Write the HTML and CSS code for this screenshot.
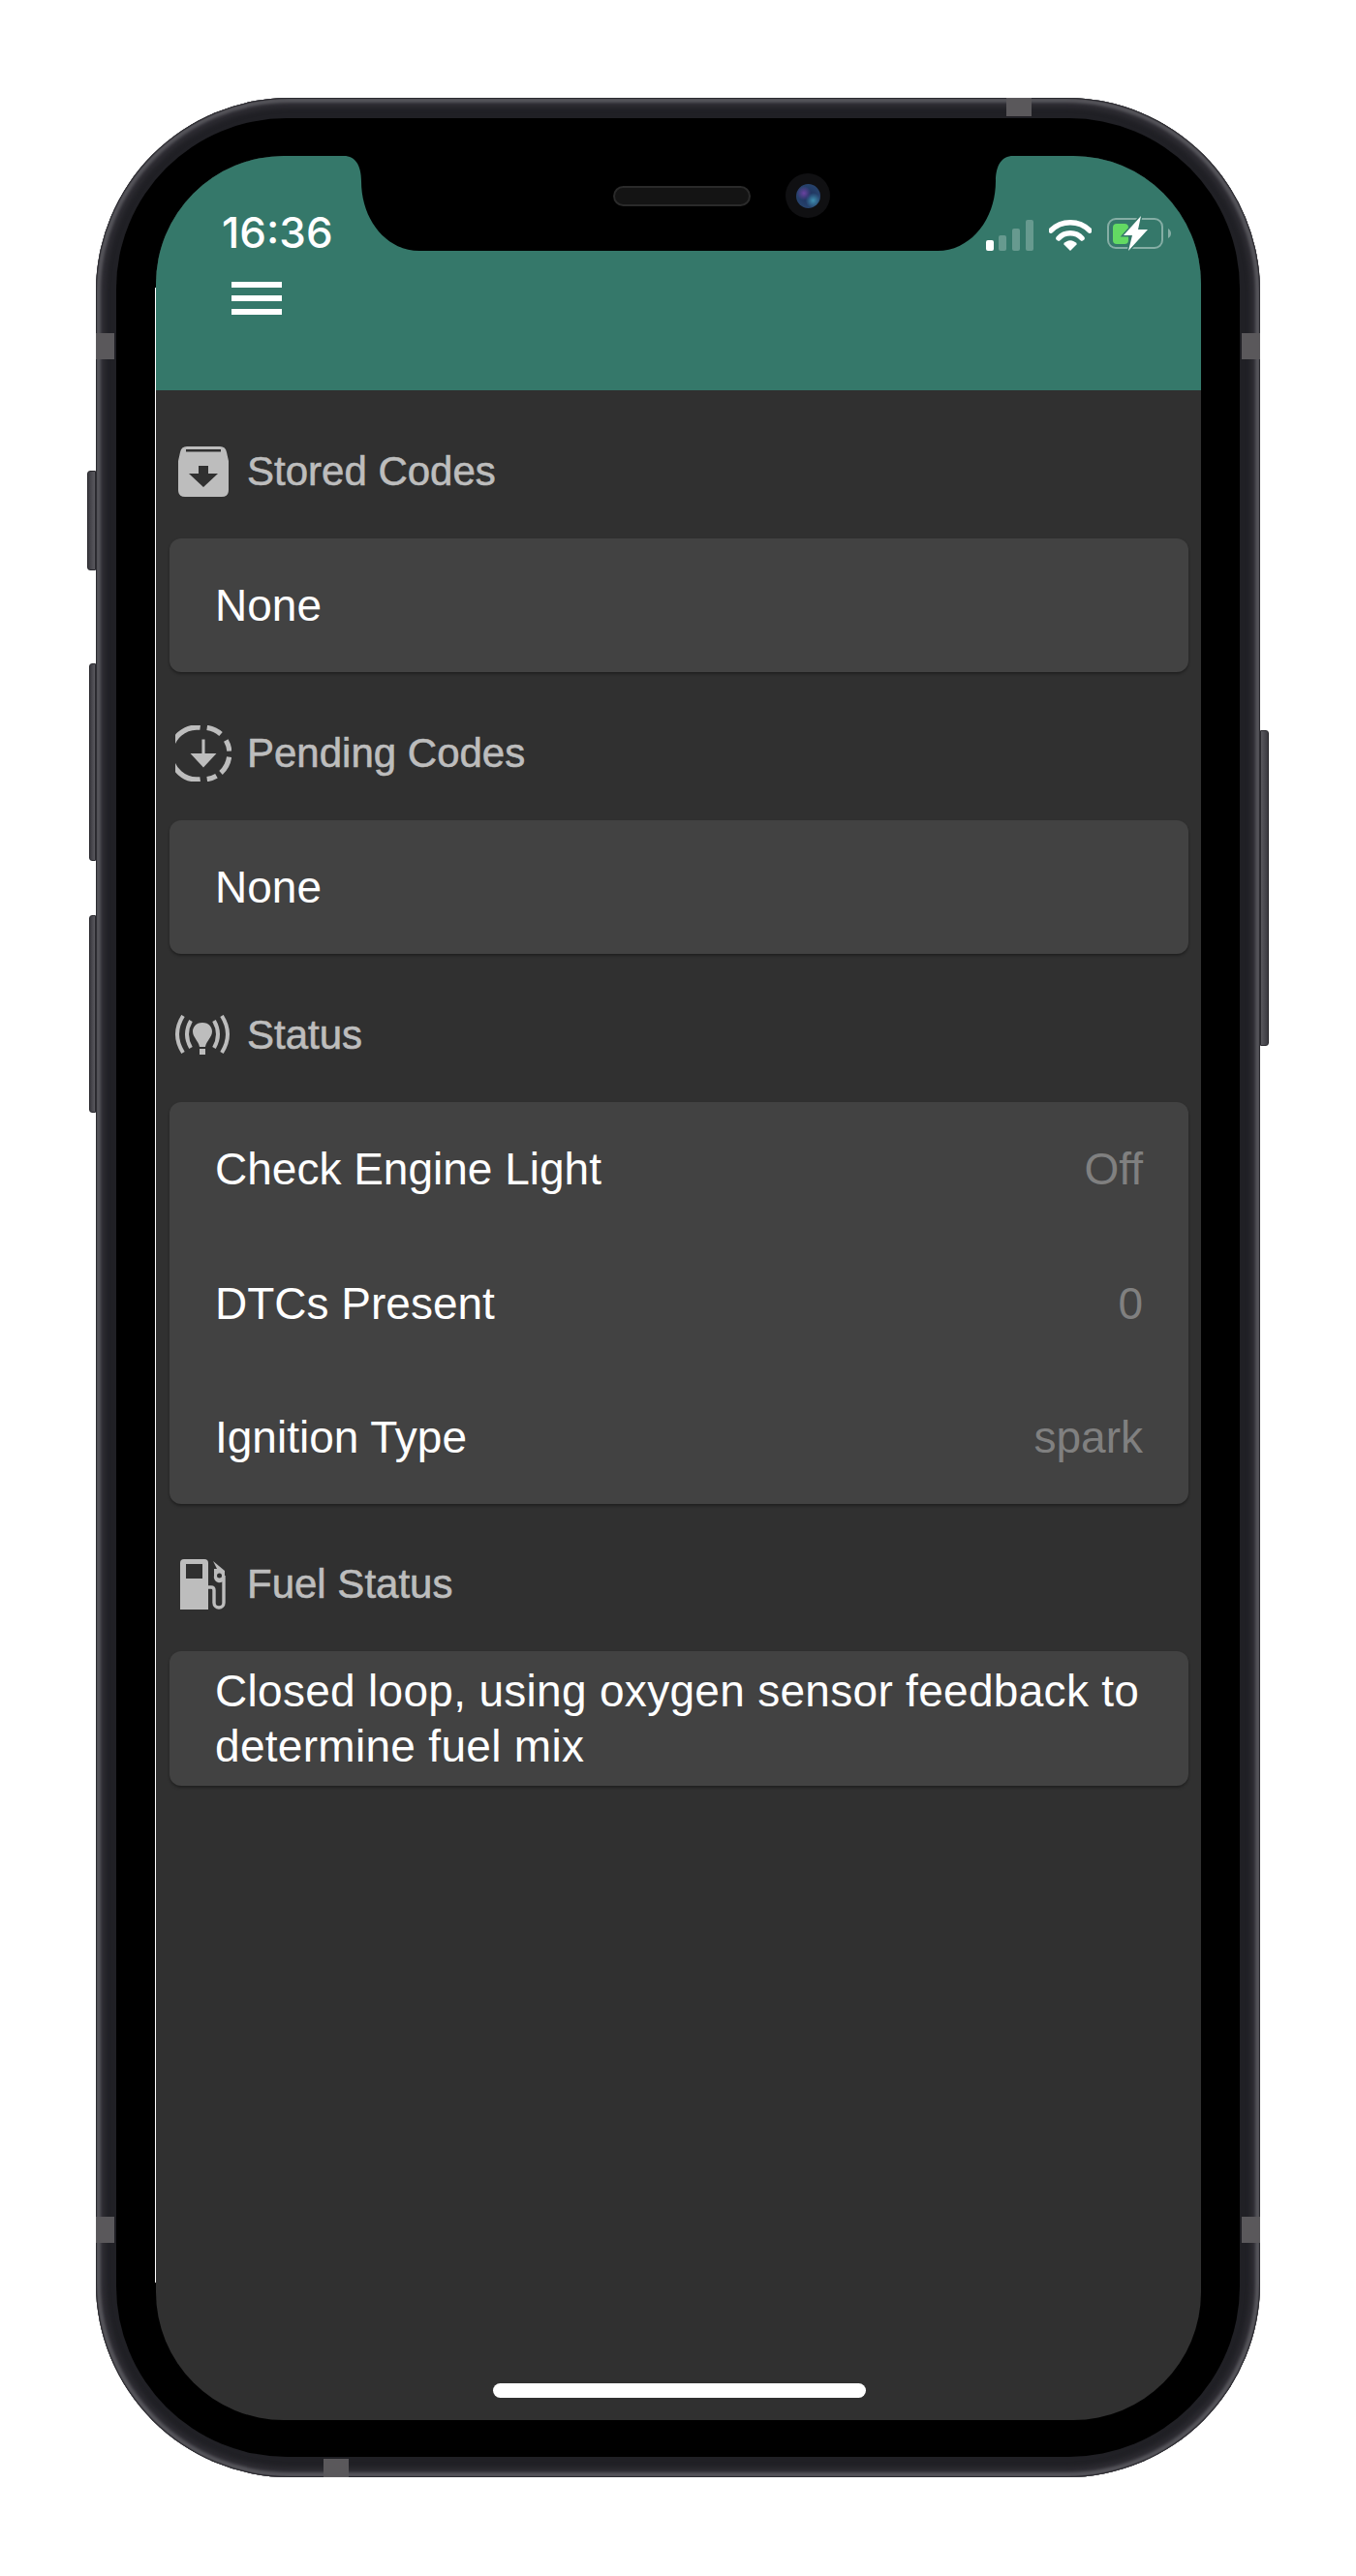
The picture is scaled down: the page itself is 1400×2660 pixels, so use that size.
FILE: index.html
```html
<!DOCTYPE html>
<html lang="en">
<head>
    <meta charset="UTF-8">
    <meta name="viewport" content="width=device-width, initial-scale=1.0">
    <title>Vehicle Diagnostics</title>
    <link rel="stylesheet" href="styles.css">
</head>
<body>
    <div class="phone">
        <span class="side-btn mute"></span>
        <span class="side-btn vol-up"></span>
        <span class="side-btn vol-down"></span>
        <span class="side-btn power"></span>
        <span class="band band-lt"></span>
        <span class="band band-lb"></span>
        <span class="band band-rt"></span>
        <span class="band band-rb"></span>
        <span class="band-h band-top"></span>
        <span class="band-h band-bottom"></span>

        <div class="bezel">
            <span class="edge-line"></span>
            <div class="screen">
                <header class="app-bar">
                    <div class="status-bar">
                        <span class="clock">16:36</span>
                        <div class="status-icons">
                            <svg class="signal" width="49" height="32" viewBox="0 0 49 32">
                                <rect x="0" y="21" width="8" height="11" rx="2" fill="#fff"/>
                                <rect x="13" y="16" width="8" height="16" rx="2" fill="#fff" opacity=".25"/>
                                <rect x="27" y="9" width="8" height="23" rx="2" fill="#fff" opacity=".25"/>
                                <rect x="41" y="0" width="8" height="32" rx="2" fill="#fff" opacity=".25"/>
                            </svg>
                            <svg class="wifi" width="44" height="32" viewBox="0 0 44 32">
                                <path d="M2 11C13 0 31 0 42 11" fill="none" stroke="#fff" stroke-width="5.5" stroke-linecap="round"/>
                                <path d="M10 19C16 12 28 12 34 19" fill="none" stroke="#fff" stroke-width="5.5" stroke-linecap="round"/>
                                <path d="M15 25C19 20 25 20 29 25L22 32Z" fill="#fff"/>
                            </svg>
                            <svg class="battery" width="66" height="36" viewBox="0 0 66 36">
                                <rect x="1" y="3" width="56" height="30" rx="8" fill="none" stroke="#fff" stroke-opacity=".4" stroke-width="2"/>
                                <path d="M63 13C65 14 66 16 66 18C66 20 65 22 63 23Z" fill="#fff" fill-opacity=".4"/>
                                <rect x="6" y="8" width="16" height="21" rx="4" fill="#63da63"/>
                                <path d="M35 0L17 20H26L22 36L42 14H32Z" fill="#fff" stroke="#35786a" stroke-width="3" paint-order="stroke"/>
                            </svg>
                        </div>
                    </div>
                    <button class="menu-btn" aria-label="Menu"><span></span><span></span><span></span></button>
                </header>

                <main class="content">
                    <h2 class="section-head">
                        <span class="head-icon">
                            <svg width="52" height="52" viewBox="0 0 52 52">
                                <path d="M9 0H43Q49 0 50 6L52 15V45Q52 52 45 52H7Q0 52 0 45V15L2 6Q3 0 9 0Z" fill="#bdbdbd"/>
                                <rect x="8" y="3" width="36" height="2.5" fill="#303030"/>
                                <path d="M21 20H31V28H41L26 42L11 28H21Z" fill="#303030"/>
                            </svg>
                        </span>
                        Stored Codes
                    </h2>
                    <section class="card">
                        <div class="row"><span>None</span></div>
                    </section>

                    <h2 class="section-head">
                        <span class="head-icon">
                            <svg width="58" height="58" viewBox="0 0 56 56">
                                <g fill="none" stroke="#bdbdbd" stroke-width="5">
                                    <path d="M24.8 2.2A26 26 0 1 0 24.8 53.8"/>
                                    <path d="M31.6 2.3A26 26 0 0 1 45.4 8.7"/>
                                    <path d="M50.5 15A26 26 0 0 1 53.9 25.7"/>
                                    <path d="M53.7 31.6A26 26 0 0 1 45.4 47.3"/>
                                    <path d="M41 50.5A26 26 0 0 1 31.6 53.7"/>
                                    <path d="M28 14V30" stroke-width="3"/>
                                </g>
                                <path d="M15 28H41L28 42Z" fill="#bdbdbd"/>
                            </svg>
                        </span>
                        Pending Codes
                    </h2>
                    <section class="card">
                        <div class="row"><span>None</span></div>
                    </section>

                    <h2 class="section-head">
                        <span class="head-icon">
                            <svg width="60" height="42" viewBox="0 0 60 42">
                                <g fill="none" stroke="#bdbdbd" stroke-width="4">
                                    <path d="M9 1Q-3 20 9 39"/>
                                    <path d="M17 6Q9 20 17 34"/>
                                    <path d="M49 1Q61 20 49 39"/>
                                    <path d="M41 6Q49 20 41 34"/>
                                </g>
                                <path d="M29 8C36 8 39 13 39 17C39 23 33 27 32 33H26C25 27 19 23 19 17C19 13 22 8 29 8Z" fill="#bdbdbd"/>
                                <rect x="26" y="35" width="6" height="6" fill="#bdbdbd"/>
                            </svg>
                        </span>
                        Status
                    </h2>
                    <section class="card">
                        <div class="row"><span>Check Engine Light</span><span class="value">Off</span></div>
                        <div class="row"><span>DTCs Present</span><span class="value">0</span></div>
                        <div class="row"><span>Ignition Type</span><span class="value">spark</span></div>
                    </section>

                    <h2 class="section-head">
                        <span class="head-icon">
                            <svg width="48" height="52" viewBox="0 0 48 52">
                                <path d="M4 0H25Q29 0 29 4V52H0V4Q0 0 4 0Z" fill="#bdbdbd"/>
                                <rect x="6" y="5" width="17" height="15" fill="#303030"/>
                                <path d="M29 29H32Q35 29 35 32V45A5 5 0 0 0 45 45V17" fill="none" stroke="#bdbdbd" stroke-width="3.4"/>
                                <path d="M34 2L46 12V20A5.5 5.5 0 1 1 35 17V10L38 10Z" fill="#bdbdbd"/>
                                <circle cx="40.500" cy="17" r="2.500" fill="#303030"/>
                            </svg>
                        </span>
                        Fuel Status
                    </h2>
                    <section class="card">
                        <div class="row wrap"><span>Closed loop, using oxygen sensor feedback to determine fuel mix</span></div>
                    </section>
                </main>

                <svg class="notch" viewBox="0 0 691 98">
                    <path d="M0 0C12 0 18 10 18 26C18 66 44 98 78 98H613C647 98 673 66 673 26C673 10 679 0 691 0Z" fill="#000"/>
                </svg>
                <span class="speaker"></span>
                <span class="camera"><span class="lens"></span></span>
                <span class="home-bar"></span>
            </div>
        </div>
    </div>
</body>
</html>
```

FILE: styles.css
```css
* {
    box-sizing: border-box;
}
body {
    margin: 0;
    background-color: #fff;
    font-family: "Liberation Sans", Arial, sans-serif;
}
.phone {
    position: relative;
    width: 1202px;
    height: 2457px;
    margin: 101px 0 0 99px;
    padding: 21px;
    background-color: #202025;
    border-radius: 200px;
    box-shadow: inset 0 0 1px 1px #29282d, inset 0 0 3px 5px #56555b, inset 0 0 5px 10px #2e2d33;
}
.bezel {
    position: relative;
    height: 100%;
    padding: 39px 40px 38px 41px;
    background-color: #000;
    border-radius: 176px;
}
.edge-line {
    position: absolute;
    left: 40px;
    top: 175px;
    width: 1px;
    height: 2060px;
    background-color: #fff;
}
.screen {
    position: relative;
    height: 100%;
    display: flex;
    flex-direction: column;
    background-color: #303030;
    border-radius: 132px;
    overflow: hidden;
}

/* hardware bits on the frame */
.side-btn {
    position: absolute;
    background: linear-gradient(to right, #3a393f, #5a595f);
    border: 1px solid #2a292e;
}
.mute {
    left: -9px;
    top: 385px;
    width: 9px;
    height: 103px;
    border-radius: 3px 0 0 3px;
}
.vol-up {
    left: -7px;
    top: 584px;
    width: 7px;
    height: 204px;
    border-radius: 3px 0 0 3px;
}
.vol-down {
    left: -7px;
    top: 844px;
    width: 7px;
    height: 204px;
    border-radius: 3px 0 0 3px;
}
.power {
    right: -9px;
    top: 653px;
    width: 9px;
    height: 326px;
    border-radius: 0 3px 3px 0;
    background: linear-gradient(to left, #3a393f, #5a595f);
}
.band {
    position: absolute;
    width: 19px;
    height: 27px;
    background-color: #5a585b;
}
.band-lt {
    left: 0;
    top: 243px;
}
.band-lb {
    left: 0;
    top: 2188px;
}
.band-rt {
    right: 0;
    top: 243px;
}
.band-rb {
    right: 0;
    top: 2188px;
}
.band-h {
    position: absolute;
    width: 26px;
    height: 19px;
    background-color: #5a585b;
}
.band-top {
    left: 940px;
    top: 0;
}
.band-bottom {
    left: 235px;
    bottom: 0;
}

.notch {
    position: absolute;
    left: 194px;
    top: 0;
    width: 691px;
    height: 98px;
}
.speaker {
    position: absolute;
    left: 472px;
    top: 31px;
    width: 142px;
    height: 21px;
    background-color: #141414;
    border: 2px solid #2a2a2a;
    border-radius: 11px;
}
.camera {
    position: absolute;
    left: 650px;
    top: 18px;
    width: 46px;
    height: 46px;
    display: flex;
    align-items: center;
    justify-content: center;
    background-color: #101012;
    border-radius: 50%;
}
.lens {
    width: 25px;
    height: 25px;
    border-radius: 50%;
    background:
        radial-gradient(circle at 32% 38%, #6a43a0 0, rgba(106,67,160,0) 32%),
        radial-gradient(circle at 70% 68%, #3f8fb0 0, rgba(63,143,176,0) 32%),
        radial-gradient(circle, #1c2f5c 0, #28456e 80%, #16233e 100%);
}

/* header */
.app-bar {
    height: 242px;
    flex-shrink: 0;
    background-color: #35786a;
    padding: 59px 31px 0 68px;
}
.status-bar {
    display: flex;
    justify-content: space-between;
    align-items: center;
    height: 40px;
}
.clock {
    color: #fff;
    font-family: Inter, "Liberation Sans", sans-serif;
    font-size: 44px;
    font-weight: 500;
}
.status-icons {
    display: flex;
    align-items: flex-end;
    gap: 16px;
    padding-top: 2px;
}
.menu-btn {
    display: flex;
    flex-direction: column;
    gap: 8px;
    width: 52px;
    margin: 31px 0 0 10px;
    padding: 0;
    background: none;
    border: none;
}
.menu-btn span {
    height: 6px;
    background-color: #fff;
}

/* content */
.content {
    padding: 0 13px 0 14px;
}
.section-head {
    display: flex;
    align-items: center;
    gap: 14px;
    height: 152.700px;
    margin: 0;
    padding: 15px 0 0 4px;
    color: #bdbdbd;
    font-size: 42px;
    font-weight: 400;
    -webkit-text-stroke: 0.6px #bdbdbd;
}
.head-icon {
    width: 62px;
    display: flex;
    justify-content: center;
}
.card {
    background-color: #424242;
    border-radius: 12px;
    box-shadow: 0 2px 3px rgba(0,0,0,0.35);
}
.row {
    display: flex;
    justify-content: space-between;
    align-items: center;
    height: 138.300px;
    padding: 2px 47px 0 47px;
    color: #fff;
    font-size: 46px;
    line-height: 57px;
}
.wrap {
    letter-spacing: 0.3px;
}
.value {
    color: #808080;
}
.home-bar {
    position: absolute;
    left: 348px;
    bottom: 23px;
    width: 385px;
    height: 15px;
    background-color: #fff;
    border-radius: 8px;
}
```
